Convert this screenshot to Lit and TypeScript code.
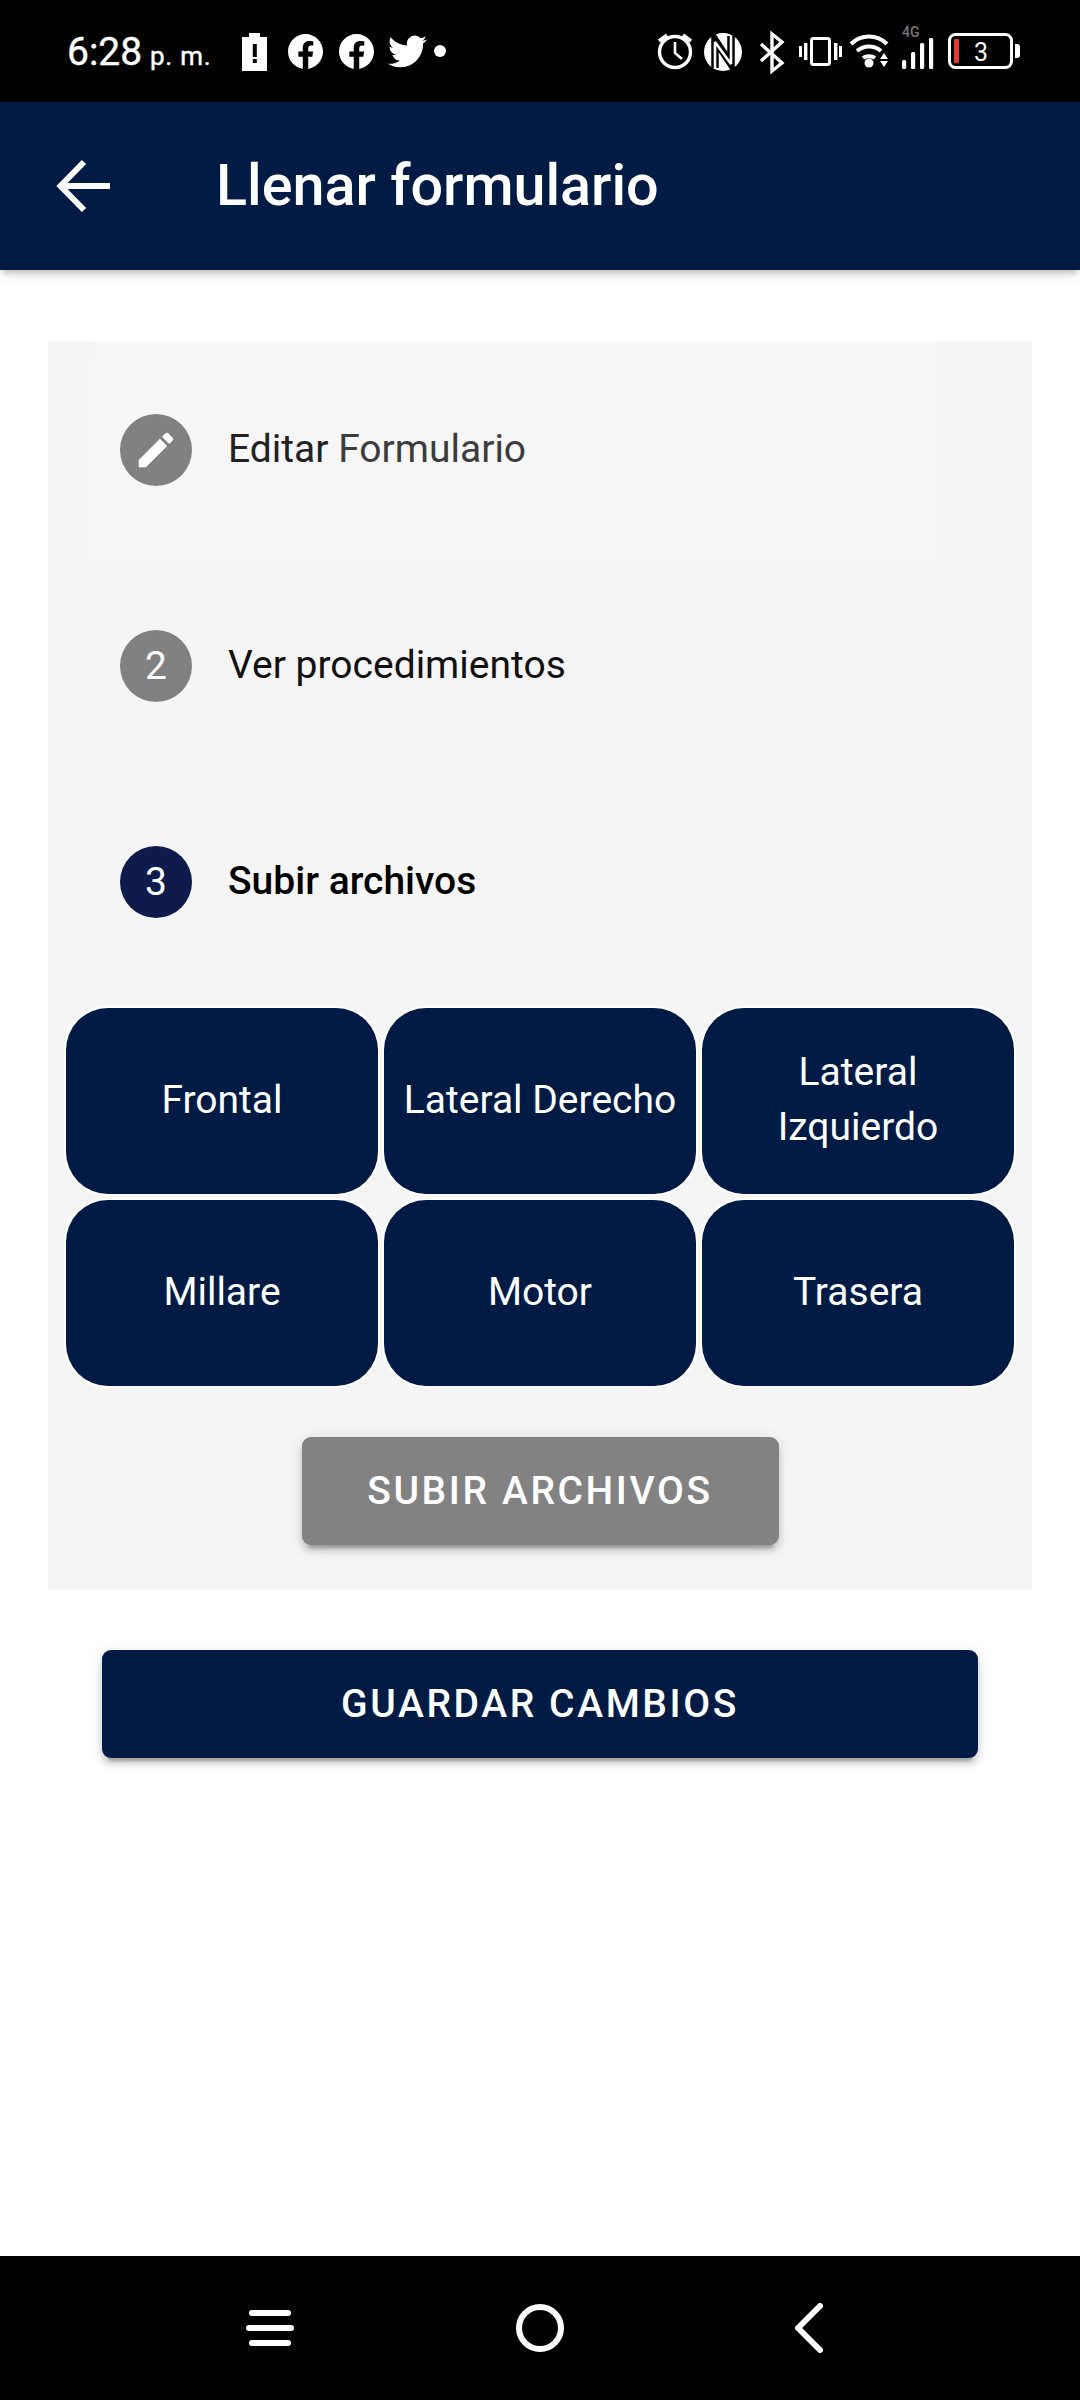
import { css, html, LitElement, svg } from 'lit';
import { customElement } from 'lit/decorators.js';

const FACEBOOK =
  'M24 12.073c0-6.627-5.373-12-12-12s-12 5.373-12 12c0 5.99 4.388 10.954 10.125 11.854v-8.385H7.078v-3.47h3.047V9.43c0-3.007 1.792-4.669 4.533-4.669 1.312 0 2.686.235 2.686.235v2.953H15.83c-1.491 0-1.956.925-1.956 1.874v2.25h3.328l-.532 3.47h-2.796v8.385C19.612 23.027 24 18.062 24 12.073z';
const TWITTER =
  'M23.953 4.57a10 10 0 01-2.825.775 4.958 4.958 0 002.163-2.723c-.951.555-2.005.959-3.127 1.184a4.92 4.92 0 00-8.384 4.482C7.69 8.095 4.067 6.13 1.64 3.162a4.822 4.822 0 00-.666 2.475c0 1.71.87 3.213 2.188 4.096a4.904 4.904 0 01-2.228-.616v.06a4.923 4.923 0 003.946 4.827 4.996 4.996 0 01-2.212.085 4.936 4.936 0 004.604 3.417 9.867 9.867 0 01-6.102 2.105c-.39 0-.779-.023-1.17-.067a13.995 13.995 0 007.557 2.209c9.053 0 13.998-7.496 13.998-13.985 0-.21 0-.42-.015-.63A9.935 9.935 0 0024 4.59z';
const PENCIL =
  'M3 17.25V21h3.75L17.81 9.94l-3.75-3.75L3 17.25zM20.71 7.04c.39-.39.39-1.02 0-1.41l-2.34-2.34c-.39-.39-1.02-.39-1.41 0l-1.83 1.83 3.75 3.75 1.83-1.83z';

const UPLOADS = ['Frontal', 'Lateral Derecho', 'Lateral Izquierdo', 'Millare', 'Motor', 'Trasera'];

@customElement('app-root')
export class AppRoot extends LitElement {
  static override styles = css`
    :host {
      display: flex;
      flex-direction: column;
      width: 1080px;
      height: 2400px;
      background: #fff;
      font-family: Roboto, 'Liberation Sans', sans-serif;
      overflow: hidden;
    }

    svg {
      display: block;
    }

    .status {
      display: flex;
      align-items: center;
      flex: none;
      height: 102px;
      padding-left: 67px;
      background: #000;
      color: #fff;
    }

    .time {
      width: 175px;
      font-size: 39px;
      white-space: nowrap;
      margin-top: 1px;
      -webkit-text-stroke: 0.4px #fff;
    }

    .time small {
      font-size: 26px;
      letter-spacing: 0.8px;
      margin-left: -2px;
    }

    .status-right {
      margin-left: 211px;
    }

    .status-text {
      font-family: Roboto, sans-serif;
    }

    .header {
      position: relative;
      display: flex;
      align-items: center;
      flex: none;
      height: 168px;
      padding-left: 56px;
      background: #011b44;
      color: #fff;
      box-shadow:
        0 6px 6px -3px rgba(0, 0, 0, 0.2),
        0 6px 12px rgba(0, 0, 0, 0.08);
    }

    .title {
      margin: 0 0 1px 104px;
      font-size: 57.5px;
      font-weight: 500;
      line-height: 1;
    }

    .main {
      flex: 1;
      padding: 72px 48px 0;
    }

    .panel {
      padding: 0 18px 45px;
      background: #f5f5f5;
    }

    .step {
      display: flex;
      align-items: flex-start;
      gap: 36px;
      height: 216px;
      box-sizing: border-box;
      margin: 0 -18px;
      padding: 72px 0 0 72px;
      font-size: 39px;
      color: #111;
    }

    .step--edit {
      background: linear-gradient(#f6f6f6, #f7f7f7) 42px 0 / 845px 100% no-repeat;
      color: #222;
    }

    .step--active {
      font-weight: 500;
      color: #000;
    }

    .step-label {
      line-height: 72px;
      margin-top: -1px;
    }

    .soft {
      color: #3c3c3c;
    }

    .dot {
      display: flex;
      align-items: center;
      justify-content: center;
      flex: none;
      width: 72px;
      height: 72px;
      border-radius: 50%;
      background: #818181;
      color: #fff;
      font-weight: 400;
    }

    .step--active .dot {
      background: #0f1b4c;
    }

    .uploads {
      display: grid;
      grid-template-columns: repeat(3, 312px);
      grid-auto-rows: 186px;
      gap: 6px;
      margin-top: 18px;
    }

    .upload {
      display: flex;
      align-items: center;
      justify-content: center;
      padding: 0 12px 2px;
      border-radius: 42px;
      background: #011b44;
      color: #fff;
      font-size: 39px;
      line-height: 55px;
      text-align: center;
      box-shadow: 0 0 0 2px #fff;
    }

    .action {
      display: flex;
      align-items: center;
      justify-content: center;
      height: 108px;
      border-radius: 9px;
      color: #fff;
      font-size: 39px;
      font-weight: 500;
      letter-spacing: 2.6px;
      box-shadow:
        0 9px 3px -6px rgba(0, 0, 0, 0.2),
        0 6px 6px rgba(0, 0, 0, 0.14),
        0 3px 15px rgba(0, 0, 0, 0.12);
    }

    .action--send {
      width: 477px;
      margin: 51px auto 0;
      background: #828282;
    }

    .action--save {
      margin: 60px 0 0 54px;
      width: 876px;
      background: #011b44;
    }

    .nav {
      display: flex;
      align-items: center;
      flex: none;
      height: 144px;
      padding-left: 246px;
      background: #000;
    }

    .nav-circle {
      margin: 0 231px 0 222px;
    }
  `;

  private renderNotifications() {
    return html`<svg width="204" height="102" viewBox="242 0 204 102" fill="#fff">
      <path d="M249 33h11v4h7v34h-25V37h7z" />
      <rect x="252.8" y="44" width="4" height="13" fill="#000" />
      <rect x="252.8" y="59" width="4" height="4" fill="#000" />
      <svg x="288" y="34" width="35" height="35" viewBox="0 0 24 24"><path d=${FACEBOOK} /></svg>
      <svg x="339" y="34" width="35" height="35" viewBox="0 0 24 24"><path d=${FACEBOOK} /></svg>
      <svg x="388" y="32" width="39" height="39" viewBox="0 0 24 24"><path d=${TWITTER} /></svg>
      <circle cx="440" cy="51" r="6" />
    </svg>`;
  }

  private renderSystemIcons() {
    return html`<svg class="status-right" width="363" height="102" viewBox="657 0 363 102" fill="#fff">
      ${svg`
        <g fill="none" stroke="#fff" stroke-width="3.4">
          <circle cx="675" cy="52" r="15.5" />
          <path d="M675 42v11l7 6" stroke-width="2.6" />
          <path d="M659 41l8-6M691 41l-8-6" stroke-width="3.6" />
        </g>
        <circle cx="723" cy="52" r="19" />
        <path d="M715 68V40l16 24V36" fill="none" stroke="#000" stroke-width="7.500" />
        <path d="M715 68V42l16 22V36" fill="none" stroke="#fff" stroke-width="2.600" stroke-linejoin="bevel" />
        <path d="M761 44l21 19-10 8V34l10 8-21 19" fill="none" stroke="#fff" stroke-width="3.4" />
        <rect x="811.5" y="38.5" width="18" height="26" rx="2" fill="none" stroke="#fff" stroke-width="3" />
        <rect x="799" y="46" width="3" height="11" />
        <rect x="804" y="43" width="3.4" height="17" />
        <rect x="834" y="43" width="3.4" height="17" />
        <rect x="839" y="46" width="3" height="11" />
        <g fill="none" stroke="#fff" stroke-width="4">
          <path d="M851 44c10-10 26-10 36 0" />
          <path d="M857 51c7-6 17-6 24 0" />
          <path d="M863 58c3-2.500 9-2.500 12 0" />
        </g>
        <circle cx="869" cy="63" r="4.500" />
        <path d="M884 53l4 6h-8zM884 67l4-6h-8z" />
        <text x="902" y="37" font-size="14" font-weight="500" fill="#777" class="status-text">4G</text>
        <rect x="902" y="60" width="4.200" height="9" rx="1.500" />
        <rect x="911" y="52" width="4.200" height="17" rx="1.500" />
        <rect x="920" y="43" width="4.200" height="26" rx="1.500" />
        <rect x="929" y="38" width="4.200" height="31" rx="1.500" />
        <rect x="949.500" y="34.500" width="62" height="33" rx="6" fill="none" stroke="#fff" stroke-width="3" />
        <rect x="954" y="39" width="5" height="24" rx="1" fill="#e53935" />
        <text x="981" y="61" font-size="25" text-anchor="middle" class="status-text">3</text>
        <path d="M1015 44h2a3 3 0 013 3v8a3 3 0 01-3 3h-2z" />
      `}
    </svg>`;
  }

  override render() {
    return html`
      <div class="status">
        <div class="time">6:28 <small>p. m.</small></div>
        ${this.renderNotifications()} ${this.renderSystemIcons()}
      </div>

      <header class="header">
        <svg width="56" height="54" viewBox="0 0 56 54" fill="none" stroke="#fff" stroke-width="6">
          <path d="M54 27H6M28 3L4.500 27 28 51" />
        </svg>
        <h1 class="title">Llenar formulario</h1>
      </header>

      <main class="main">
        <section class="panel">
          <div class="step step--edit">
            <div class="dot">
              <svg width="46" height="46" viewBox="0 0 24 24" fill="#fff"><path d=${PENCIL} /></svg>
            </div>
            <div class="step-label">Editar <span class="soft">Formulario</span></div>
          </div>
          <div class="step">
            <div class="dot">2</div>
            <div class="step-label">Ver procedimientos</div>
          </div>
          <div class="step step--active">
            <div class="dot">3</div>
            <div class="step-label">Subir archivos</div>
          </div>
          <div class="uploads">
            ${UPLOADS.map((name) => html`<div class="upload">${name}</div>`)}
          </div>
          <div class="action action--send">SUBIR ARCHIVOS</div>
        </section>
        <div class="action action--save">GUARDAR CAMBIOS</div>
      </main>

      <nav class="nav">
        <svg width="48" height="36" viewBox="0 0 48 36" fill="#fff">
          <rect x="3" y="0" width="42" height="6" rx="3" />
          <rect x="0" y="15" width="48" height="6" rx="3" />
          <rect x="3" y="30" width="42" height="6" rx="3" />
        </svg>
        <svg class="nav-circle" width="48" height="48" viewBox="0 0 48 48" fill="none" stroke="#fff" stroke-width="6">
          <circle cx="24" cy="24" r="21" />
        </svg>
        <svg width="28" height="50" viewBox="0 0 28 50" fill="none" stroke="#fff" stroke-width="6" stroke-linecap="round" stroke-linejoin="round">
          <path d="M25 3L3 25l22 22" />
        </svg>
      </nav>
    `;
  }
}
